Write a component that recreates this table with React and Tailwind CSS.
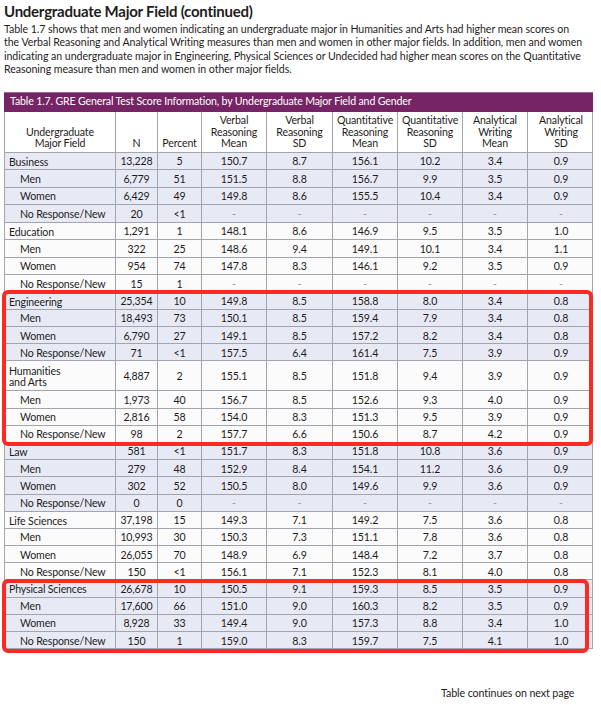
import React from "react";

const rows = [
  ["Business", "13,228", "5", "150.7", "8.7", "156.1", "10.2", "3.4", "0.9", 0],
  ["Men", "6,779", "51", "151.5", "8.8", "156.7", "9.9", "3.5", "0.9", 1],
  ["Women", "6,429", "49", "149.8", "8.6", "155.5", "10.4", "3.4", "0.9", 1],
  ["No Response/New", "20", "<1", "-", "-", "-", "-", "-", "-", 1],
  ["Education", "1,291", "1", "148.1", "8.6", "146.9", "9.5", "3.5", "1.0", 0],
  ["Men", "322", "25", "148.6", "9.4", "149.1", "10.1", "3.4", "1.1", 1],
  ["Women", "954", "74", "147.8", "8.3", "146.1", "9.2", "3.5", "0.9", 1],
  ["No Response/New", "15", "1", "-", "-", "-", "-", "-", "-", 1],
  ["Engineering", "25,354", "10", "149.8", "8.5", "158.8", "8.0", "3.4", "0.8", 0],
  ["Men", "18,493", "73", "150.1", "8.5", "159.4", "7.9", "3.4", "0.8", 1],
  ["Women", "6,790", "27", "149.1", "8.5", "157.2", "8.2", "3.4", "0.8", 1],
  ["No Response/New", "71", "<1", "157.5", "6.4", "161.4", "7.5", "3.9", "0.9", 1],
  ["Humanities\nand Arts", "4,887", "2", "155.1", "8.5", "151.8", "9.4", "3.9", "0.9", 0],
  ["Men", "1,973", "40", "156.7", "8.5", "152.6", "9.3", "4.0", "0.9", 1],
  ["Women", "2,816", "58", "154.0", "8.3", "151.3", "9.5", "3.9", "0.9", 1],
  ["No Response/New", "98", "2", "157.7", "6.6", "150.6", "8.7", "4.2", "0.9", 1],
  ["Law", "581", "<1", "151.7", "8.3", "151.8", "10.8", "3.6", "0.9", 0],
  ["Men", "279", "48", "152.9", "8.4", "154.1", "11.2", "3.6", "0.9", 1],
  ["Women", "302", "52", "150.5", "8.0", "149.6", "9.9", "3.6", "0.9", 1],
  ["No Response/New", "0", "0", "-", "-", "-", "-", "-", "-", 1],
  ["Life Sciences", "37,198", "15", "149.3", "7.1", "149.2", "7.5", "3.6", "0.8", 0],
  ["Men", "10,993", "30", "150.3", "7.3", "151.1", "7.8", "3.6", "0.8", 1],
  ["Women", "26,055", "70", "148.9", "6.9", "148.4", "7.2", "3.7", "0.8", 1],
  ["No Response/New", "150", "<1", "156.1", "7.1", "152.3", "8.1", "4.0", "0.8", 1],
  ["Physical Sciences", "26,678", "10", "150.5", "9.1", "159.3", "8.5", "3.5", "0.9", 0],
  ["Men", "17,600", "66", "151.0", "9.0", "160.3", "8.2", "3.5", "0.9", 1],
  ["Women", "8,928", "33", "149.4", "9.0", "157.3", "8.8", "3.4", "1.0", 1],
  ["No Response/New", "150", "1", "159.0", "8.3", "159.7", "7.5", "4.1", "1.0", 1],
];

const headers = [
  ["Undergraduate", "Major Field"],
  ["N"],
  ["Percent"],
  ["Verbal", "Reasoning", "Mean"],
  ["Verbal", "Reasoning", "SD"],
  ["Quantitative", "Reasoning", "Mean"],
  ["Quantitative", "Reasoning", "SD"],
  ["Analytical", "Writing", "Mean"],
  ["Analytical", "Writing", "SD"],
];

const gridCols = "grid grid-cols-[111px_42px_44px_65px_66px_65px_65px_65px_66px]";

export default function App() {
  return (
    <div
      className="relative w-[601px] h-[705px] bg-white text-[#1f1c1d] overflow-hidden"
      style={{ fontFamily: "Lato, 'Open Sans', sans-serif" }}
    >
      <div className="px-[4px] pt-[1px]">
        <h1 className="text-[15px] leading-[20px] font-bold tracking-[-0.25px] whitespace-nowrap">
          Undergraduate Major Field (continued)
        </h1>
        <p className="mt-[2px] text-[10.6px] leading-[13.4px] tracking-[-0.05px] whitespace-nowrap">
          Table 1.7 shows that men and women indicating an undergraduate major in Humanities and Arts had higher mean scores on
          <br />
          the Verbal Reasoning and Analytical Writing measures than men and women in other major fields. In addition, men and women
          <br />
          indicating an undergraduate major in Engineering, Physical Sciences or Undecided had higher mean scores on the Quantitative
          <br />
          Reasoning measure than men and women in other major fields.
        </p>
      </div>

      <div className="ml-[4px] mt-[15px] w-[589px]">
        <div className="h-[20px] bg-[#772466] flex items-center pl-[6px] text-white text-[10.6px] tracking-[-0.15px] border-t border-[#9a6a8e] whitespace-nowrap">
          Table 1.7. GRE General Test Score Information, by Undergraduate Major Field and Gender
        </div>
        <div className="border-l border-r border-[#a3a5ae]">
          <div className={`${gridCols} h-[41px] border-b border-[#a3a5ae] bg-white`}>
            {headers.map((h, i) => (
              <div
                key={i}
                className={`flex flex-col justify-end items-center pb-[2px] text-[10.6px] leading-[11.4px] tracking-[-0.15px] text-center whitespace-nowrap ${
                  i < 8 ? "border-r border-[#a3a5ae]" : ""
                }`}
              >
                {h.map((l, j) => (
                  <span key={j}>{l}</span>
                ))}
              </div>
            ))}
          </div>
          {rows.map((r, ri) => {
            const group = Math.floor(ri / 4);
            const blue = group % 2 === 0;
            const hCls = ri === 12 ? "h-[30px]" : ri < 8 ? "h-[17.5px]" : "h-[17.2px]";
            return (
              <div
                key={ri}
                className={`${gridCols} ${hCls} border-b border-[#a3a5ae] ${
                  blue ? "bg-[#e7eaf5]" : "bg-[#fbfbfb]"
                } text-[10.6px] tracking-[-0.15px]`}
              >
                {r.slice(0, 9).map((c, ci) => (
                  <div
                    key={ci}
                    className={`flex items-center pt-[1.5px] ${
                      ci === 0
                        ? r[9]
                          ? "pl-[15px] whitespace-nowrap"
                          : "pl-[4px] whitespace-pre leading-[11px]"
                        : "justify-center"
                    } ${ci < 8 ? "border-r border-[#a3a5ae]" : ""} ${
                      c === "-" ? "text-[#9a9a9a]" : ""
                    }`}
                  >
                    {c}
                  </div>
                ))}
              </div>
            );
          })}
        </div>
      </div>

      <div className="absolute left-[441px] top-[685px] text-[10.7px] tracking-[-0.1px] whitespace-nowrap">
        Table continues on next page
      </div>

      <div className="absolute left-[2px] top-[290px] w-[591px] h-[156px] border-[4px] border-[#fb2a22] rounded-[6px]" />
      <div className="absolute left-[2px] top-[579px] w-[587px] h-[74px] border-[4px] border-[#fb2a22] rounded-[6px]" />
    </div>
  );
}
